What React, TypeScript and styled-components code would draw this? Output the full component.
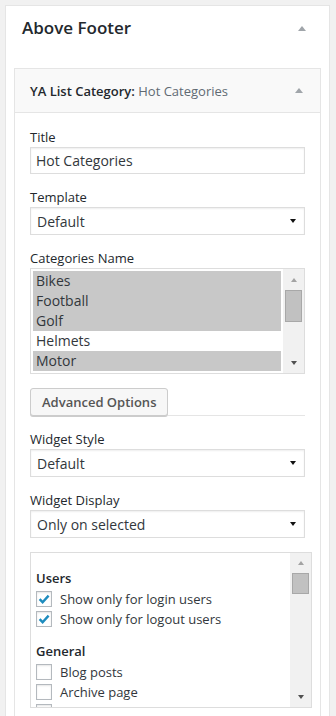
import React from "react";
import styled, { createGlobalStyle } from "styled-components";

const Global = createGlobalStyle`
  html, body { margin: 0; padding: 0; background: #f1f1f1; }
  body { font-family: "Open Sans", "Noto Sans", sans-serif; color: #23282d; }
  * { box-sizing: border-box; }
`;

const Sidebar = styled.div`
  margin: 5px 0 0 5px;
  width: 325px;
  background: #fff;
  border: 1px solid #e5e5e5;
  padding: 0 8px 30px;
`;

const SidebarHeader = styled.div`
  display: flex;
  align-items: center;
  justify-content: space-between;
  padding: 10px 15px 28px 8px;
  height: 62px;
`;

const SidebarTitle = styled.h2`
  margin: 0;
  font-size: 17px;
  line-height: 24px;
  font-weight: 600;
  color: #23282d;
`;

const UpArrow = styled.span<{ $size?: number; $color?: string }>`
  width: 0;
  height: 0;
  border-left: ${(p) => (p.$size ?? 8) / 2}px solid transparent;
  border-right: ${(p) => (p.$size ?? 8) / 2}px solid transparent;
  border-bottom: ${(p) => Math.round((p.$size ?? 8) * 0.6)}px solid ${(p) => p.$color ?? "#a0a5aa"};
`;

const DownArrow = styled.span<{ $size?: number; $color?: string }>`
  width: 0;
  height: 0;
  border-left: ${(p) => (p.$size ?? 8) / 2}px solid transparent;
  border-right: ${(p) => (p.$size ?? 8) / 2}px solid transparent;
  border-top: ${(p) => Math.round((p.$size ?? 8) * 0.6)}px solid ${(p) => p.$color ?? "#111"};
`;

const Widget = styled.div`
  border: 1px solid #e5e5e5;
  background: #fff;
`;

const WidgetTop = styled.div`
  display: flex;
  align-items: center;
  justify-content: space-between;
  height: 44px;
  background: #f9f9f9;
  border-bottom: 1px solid #e5e5e5;
  padding: 0 17px 0 15px;
`;

const WidgetTitle = styled.h3`
  margin: 0;
  font-size: 13px;
  font-weight: 600;
  color: #23282d;
  line-height: 18px;
`;

const InTitle = styled.span`
  font-weight: 400;
  color: #606a73;
`;

const WidgetInside = styled.div`
  padding: 15px 15px 30px;
`;

const Field = styled.div`
  display: flex;
  flex-direction: column;
  gap: 1px;
  margin-bottom: 14px;
`;

const Label = styled.label`
  font-size: 13px;
  line-height: 18px;
  color: #23282d;
`;

const TextInput = styled.div`
  height: 27px;
  border: 1px solid #ddd;
  box-shadow: inset 0 1px 2px rgba(0, 0, 0, 0.07);
  padding: 0 5px;
  display: flex;
  align-items: center;
  font-size: 14px;
  color: #32373c;
`;

const Select = styled.div`
  height: 28px;
  border: 1px solid #ddd;
  box-shadow: inset 0 1px 2px rgba(0, 0, 0, 0.07);
  padding: 0 8px 0 6px;
  display: flex;
  align-items: center;
  justify-content: space-between;
  font-size: 14px;
  color: #32373c;
`;

const ListBox = styled.div<{ $h: number; $w?: number }>`
  height: ${(p) => p.$h}px;
  width: ${(p) => (p.$w ? `${p.$w}px` : "auto")};
  border: 1px solid #ddd;
  display: flex;
  overflow: hidden;
  background: #fff;
`;

const Options = styled.div`
  flex: 1;
  padding: 2px;
`;

const Option = styled.div<{ $selected?: boolean }>`
  height: 20px;
  line-height: 20px;
  padding-left: 3px;
  font-size: 14px;
  color: #32373c;
  background: ${(p) => (p.$selected ? "#c8c8c8" : "transparent")};
`;

const Track = styled.div`
  width: 21px;
  background: #f1f1f1;
  display: flex;
  flex-direction: column;
  align-items: center;
`;

const ScrollBtn = styled.div<{ $h?: number }>`
  height: ${(p) => p.$h ?? 21}px;
  width: 100%;
  display: flex;
  align-items: center;
  justify-content: center;
`;

const ThumbArea = styled.div`
  flex: 1;
  width: 100%;
  display: flex;
  justify-content: center;
`;

const Thumb = styled.div<{ $h: number }>`
  width: 17px;
  height: ${(p) => p.$h}px;
  background: #c1c1c1;
  border: 1px solid #a8a8a8;
`;

const Scrollbar = ({ thumb, upGap = 21 }: { thumb: number; upGap?: number }) => (
  <Track>
    <ScrollBtn $h={upGap}>
      <UpArrow $size={7} $color="#a3a3a3" />
    </ScrollBtn>
    <ThumbArea>
      <Thumb $h={thumb} />
    </ThumbArea>
    <ScrollBtn>
      <DownArrow $size={7} $color="#505050" />
    </ScrollBtn>
  </Track>
);

const ButtonRow = styled.div`
  display: flex;
  align-items: flex-end;
  margin-bottom: 14px;
`;

const Button = styled.div`
  height: 28px;
  padding: 0 11px;
  display: flex;
  align-items: center;
  background: #f7f7f7;
  border: 1px solid #ccc;
  border-radius: 3px;
  box-shadow: 0 1px 0 #ccc;
  font-size: 13px;
  font-weight: 600;
  color: #555;
`;

const Rule = styled.div`
  flex: 1;
  border-bottom: 1px solid #e5e5e5;
`;

const CheckContent = styled.div`
  flex: 1;
  padding: 15px 5px 0;
`;

const Group = styled.div`
  margin-bottom: 12px;
`;

const GroupTitle = styled.div`
  font-size: 13px;
  line-height: 20px;
  font-weight: 600;
  color: #23282d;
  margin-bottom: 1px;
`;

const CheckRow = styled.div`
  display: flex;
  align-items: center;
  gap: 8px;
  height: 20px;
  font-size: 13px;
  color: #32373c;
  white-space: nowrap;
`;

const Box = styled.span`
  width: 16px;
  height: 16px;
  border: 1px solid #b4b9be;
  background: #fff;
  box-shadow: inset 0 1px 2px rgba(0, 0, 0, 0.1);
  display: flex;
  align-items: center;
  justify-content: center;
  flex-shrink: 0;
`;

const Check = ({ checked, label }: { checked?: boolean; label: string }) => (
  <CheckRow>
    <Box>
      {checked && (
        <svg width="14" height="14" viewBox="0 0 14 14">
          <path d="M2.6 7.2 L5.6 10.2 L11.6 3.6" fill="none" stroke="#1e8cbe" strokeWidth="2.4" />
        </svg>
      )}
    </Box>
    {label}
  </CheckRow>
);

export default function App() {
  return (
    <>
      <Global />
      <Sidebar>
        <SidebarHeader>
          <SidebarTitle>Above Footer</SidebarTitle>
          <UpArrow $size={8} />
        </SidebarHeader>
        <Widget>
          <WidgetTop>
            <WidgetTitle>
              YA List Category: <InTitle>Hot Categories</InTitle>
            </WidgetTitle>
            <UpArrow $size={8} />
          </WidgetTop>
          <WidgetInside>
            <Field>
              <Label>Title</Label>
              <TextInput>Hot Categories</TextInput>
            </Field>
            <Field>
              <Label>Template</Label>
              <Select>
                Default
                <DownArrow $size={6} $color="#111" />
              </Select>
            </Field>
            <Field>
              <Label>Categories Name</Label>
              <ListBox $h={106}>
                <Options>
                  <Option $selected>Bikes</Option>
                  <Option $selected>Football</Option>
                  <Option $selected>Golf</Option>
                  <Option>Helmets</Option>
                  <Option $selected>Motor</Option>
                </Options>
                <Scrollbar thumb={32} />
              </ListBox>
            </Field>
            <ButtonRow>
              <Button>Advanced Options</Button>
              <Rule />
            </ButtonRow>
            <Field>
              <Label>Widget Style</Label>
              <Select>
                Default
                <DownArrow $size={6} $color="#111" />
              </Select>
            </Field>
            <Field>
              <Label>Widget Display</Label>
              <Select>
                Only on selected
                <DownArrow $size={6} $color="#111" />
              </Select>
            </Field>
            <ListBox $h={156} $w={282}>
              <CheckContent>
                <Group>
                  <GroupTitle>Users</GroupTitle>
                  <Check checked label="Show only for login users" />
                  <Check checked label="Show only for logout users" />
                </Group>
                <Group>
                  <GroupTitle>General</GroupTitle>
                  <Check label="Blog posts" />
                  <Check label="Archive page" />
                  <Check label="Search page" />
                </Group>
              </CheckContent>
              <Scrollbar thumb={21} upGap={20} />
            </ListBox>
          </WidgetInside>
        </Widget>
      </Sidebar>
    </>
  );
}
